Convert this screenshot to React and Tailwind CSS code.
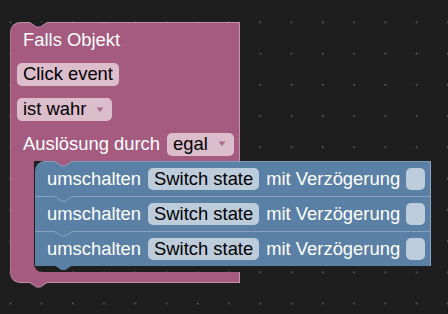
const font = { fontFamily: '"Liberation Sans", Arial, sans-serif' };

function Arrow({ color }) {
  return (
    <svg width="8" height="6" viewBox="0 0 8 6" className="ml-[10px] mr-[2px]">
      <path d="M0.5 0.5 L7.5 0.5 L4 5 Z" fill={color} />
    </svg>
  );
}

function PinkField({ children, arrow }) {
  return (
    <div className="flex items-center h-[23px] px-[6px] rounded-[5px] bg-[#dbbdcc] text-black">
      <span>{children}</span>
      {arrow && <Arrow color="#a86a89" />}
    </div>
  );
}

// notch shape, scaled 1.25
const NOTCH = "M0 0 L7.5 5 L11.25 5 L18.75 0";

function BlueRow({ first, last }) {
  return (
    <div
      className={`relative h-[35px] flex items-center pl-[12px] bg-[#5b80a5] border-r border-[#8aa6c2] ${
        first ? "rounded-tl-[10px] border-t border-t-[#7f9dbb]" : "border-t border-t-[#86a2bf]"
      }`}
    >
      {first ? (
        <svg width="20" height="6" className="absolute left-[19px] -top-[1px]">
          <path d={NOTCH + " Z"} fill="#a55b80" />
          <path d={NOTCH} fill="none" stroke="#8aa6c2" strokeWidth="1" />
        </svg>
      ) : (
        <svg width="20" height="6" className="absolute left-[19px] -top-[1px]">
          <path d={NOTCH + " Z"} fill="#5b80a5" />
          <path d={NOTCH} fill="none" stroke="#86a2bf" strokeWidth="1" />
        </svg>
      )}
      {last && (
        <svg width="20" height="6" className="absolute left-[19px] -bottom-[5px]">
          <path d={NOTCH + " Z"} fill="#5b80a5" />
        </svg>
      )}
      <span className="text-white">umschalten</span>
      <div className="ml-[7px] flex items-center h-[22px] px-[6px] rounded-[5px] bg-[#bdccdb] text-black">
        Switch state
      </div>
      <span className="ml-[7px] text-white">mit Verzögerung</span>
      <div className="ml-[6px] w-[19px] h-[22px] rounded-[5px] bg-[#bdccdb]" />
    </div>
  );
}

export default function App() {
  return (
    <div
      className="relative w-[448px] h-[314px] overflow-hidden bg-[#1e1e1e] text-[18.4px] leading-none"
      style={font}
    >
      {/* workspace grid */}
      <svg className="absolute inset-0" width="448" height="314">
        <defs>
          <pattern id="dots" x="9.5" y="21.5" width="31.25" height="31.25" patternUnits="userSpaceOnUse">
            <rect width="1.5" height="1.5" fill="#6c6c6c" />
          </pattern>
        </defs>
        <rect width="448" height="314" fill="url(#dots)" />
      </svg>

      {/* event block */}
      <div className="absolute left-[10px] top-[22px] w-[230px]">
        <div className="relative bg-[#a55b80] rounded-tl-[10px] border-t border-r border-[#c290a9] border-l border-l-[#b57592]">
          <svg width="20" height="6" className="absolute left-[18px] -top-[1px]">
            <path d={NOTCH + " Z"} fill="#1e1e1e" />
            <path d={NOTCH} fill="none" stroke="#c290a9" strokeWidth="1" />
          </svg>
          <div className="h-[34px] flex items-center pl-[12px] text-white">Falls Objekt</div>
          <div className="h-[35px] flex items-center pl-[6px]">
            <PinkField>Click event</PinkField>
          </div>
          <div className="h-[35px] flex items-center pl-[6px]">
            <PinkField arrow>ist wahr</PinkField>
          </div>
          <div className="h-[34px] flex items-center pl-[12px]">
            <span className="text-white">Auslösung durch</span>
            <div className="ml-[7px]">
              <PinkField arrow>egal</PinkField>
            </div>
          </div>
        </div>

        <div className="flex h-[111px]">
          <div className="w-[24px] shrink-0 bg-[#a55b80] border-l border-[#b57592]" />
          <div className="relative flex-1 min-w-0">
            <svg width="8" height="8" className="absolute left-0 bottom-0">
              <path d="M0 0 A8 8 0 0 0 8 8 L0 8 Z" fill="#a55b80" />
            </svg>
            <div className="relative ml-[1px] w-[396px]">
              <BlueRow first />
              <BlueRow />
              <BlueRow last />
            </div>
          </div>
        </div>

        <div className="relative h-[11px] bg-[#a55b80] rounded-bl-[10px] border-r border-b border-[#c290a9] border-l border-l-[#b57592]">
          <svg width="20" height="6" className="absolute left-[18px] -bottom-[6px]">
            <path d={NOTCH + " Z"} fill="#a55b80" />
            <path d={NOTCH} fill="none" stroke="#c290a9" strokeWidth="1" />
          </svg>
        </div>
      </div>
    </div>
  );
}
